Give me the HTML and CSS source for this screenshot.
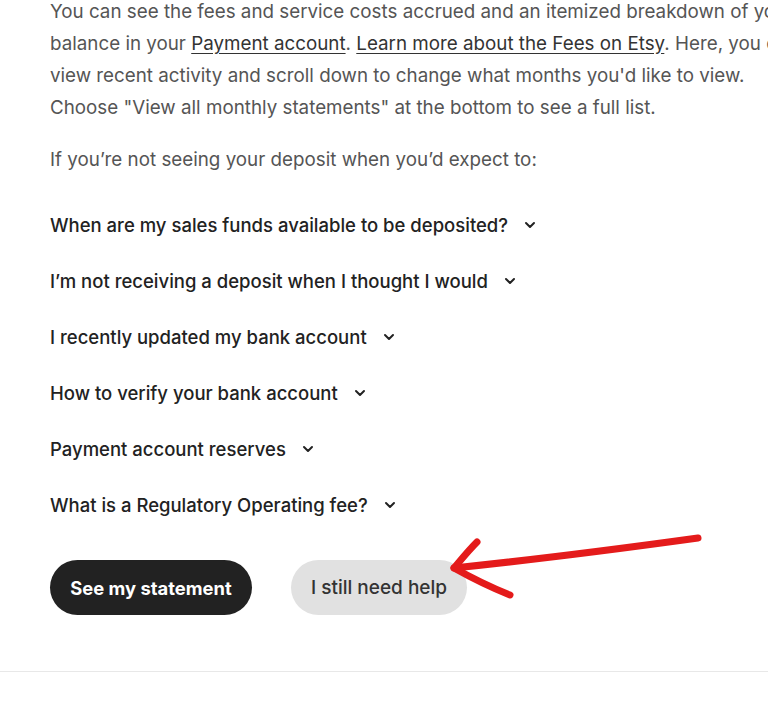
FILE: index.html
```html
<!DOCTYPE html>
<html lang="en">
<head>
<meta charset="utf-8">
<title>Payment account help</title>
<link rel="stylesheet" href="styles.css">
</head>
<body>
<div class="page">
  <div class="content">
    <p class="intro">You can see the fees and service costs accrued and an itemized breakdown of your<br>balance in your <a href="#">Payment account</a>. <a href="#">Learn more about the Fees on Etsy</a>. Here, you can<br>view recent activity and scroll down to change what months you'd like to view.<br>Choose "View all monthly statements" at the bottom to see a full list.</p>
    <p class="lead">If you’re not seeing your deposit when you’d expect to:</p>
    <ul class="faq">
      <li class="q"><span>When are my sales funds available to be deposited?</span><svg class="chev" viewBox="0 0 12 8"><path d="M2 2l4 4 4-4"/></svg></li>
      <li class="q"><span>I’m not receiving a deposit when I thought I would</span><svg class="chev" viewBox="0 0 12 8"><path d="M2 2l4 4 4-4"/></svg></li>
      <li class="q"><span>I recently updated my bank account</span><svg class="chev" viewBox="0 0 12 8"><path d="M2 2l4 4 4-4"/></svg></li>
      <li class="q"><span>How to verify your bank account</span><svg class="chev" viewBox="0 0 12 8"><path d="M2 2l4 4 4-4"/></svg></li>
      <li class="q"><span>Payment account reserves</span><svg class="chev" viewBox="0 0 12 8"><path d="M2 2l4 4 4-4"/></svg></li>
      <li class="q"><span>What is a Regulatory Operating fee?</span><svg class="chev" viewBox="0 0 12 8"><path d="M2 2l4 4 4-4"/></svg></li>
    </ul>
    <div class="actions">
      <button class="btn btn-dark">See my statement</button>
      <button class="btn btn-light">I still need help</button>
    </div>
  </div>
  <hr class="divider">
  <svg class="arrow" viewBox="0 0 270 80" width="270" height="80">
    <path d="M258 13 C 200 21, 120 32, 14 43"/>
    <path d="M37 17 C 28 26, 20 36, 14 43 C 30 52, 50 62, 70 70"/>
  </svg>
</div>
</body>
</html>
```
FILE: styles.css
```css
html, body {
  margin: 0;
  padding: 0;
  background: #ffffff;
}
body {
  font-family: Inter, Roboto, "Liberation Sans", sans-serif;
  color: #555555;
  overflow: hidden;
}
.page {
  position: relative;
  width: 768px;
  height: 702px;
  overflow: hidden;
}
.content {
  padding-left: 50px;
}
.intro, .lead {
  margin: 0;
  font-size: 18.8px;
  line-height: 32px;
  white-space: nowrap;
}
.intro {
  margin-top: -4px;
}
.intro a {
  color: #333;
  text-decoration: underline;
  text-underline-offset: 3px;
}
.lead {
  margin-top: 20px;
}
.faq {
  list-style: none;
  margin: 21px 0 0;
  padding: 0;
}
.q {
  display: flex;
  align-items: center;
  gap: 16px;
  height: 56px;
  font-size: 18.5px;
  font-weight: 500;
  color: #222222;
}
.chev {
  width: 12px;
  height: 8px;
  fill: none;
  stroke: #222;
  stroke-width: 2;
  stroke-linecap: round;
  stroke-linejoin: round;
}
.actions {
  display: flex;
  gap: 39px;
  margin-top: 27px;
}
.btn {
  height: 55px;
  border: none;
  border-radius: 28px;
  padding: 0;
  font-family: Inter, Roboto, "Liberation Sans", sans-serif;
  font-size: 18.4px;
}
.btn-dark {
  background: #222222;
  color: #ffffff;
  font-weight: 700;
  width: 202px;
}
.btn-light {
  background: #e1e1e1;
  color: #333333;
  font-weight: 500;
  font-size: 19px;
  width: 176px;
}
.divider {
  border: none;
  border-top: 1px solid #e8e8e8;
  margin: 56px 0 0;
}
.arrow {
  position: absolute;
  left: 440px;
  top: 525px;
  fill: none;
  stroke: #e41b1b;
  stroke-width: 7;
  stroke-linecap: round;
  stroke-linejoin: round;
}
```
